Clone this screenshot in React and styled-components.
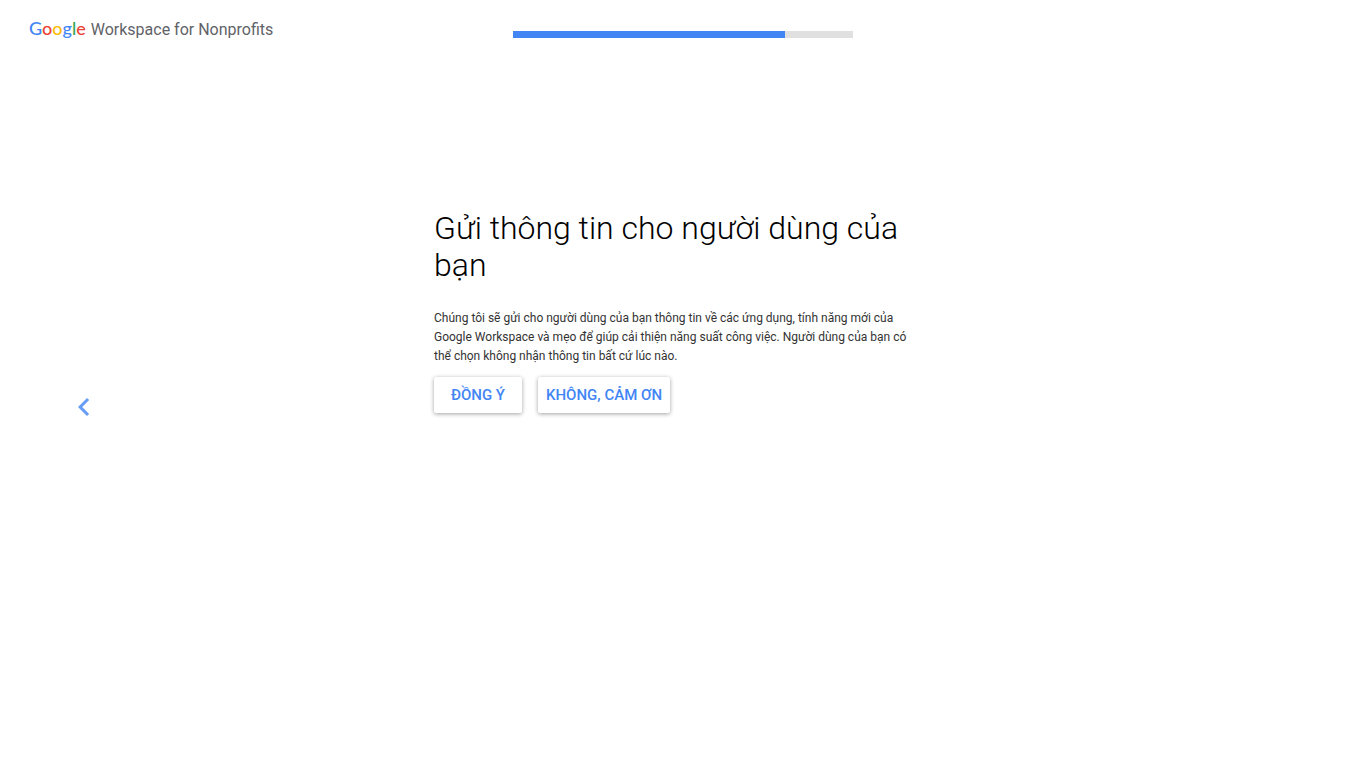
import React from 'react'
import styled, { createGlobalStyle } from 'styled-components'

const GlobalStyle = createGlobalStyle`
  * {
    box-sizing: border-box;
  }
  body {
    margin: 0;
    background: #fff;
    color: #000;
    font-family: Roboto, sans-serif;
  }
`

const Page = styled.div`
  display: flex;
  flex-direction: column;
  min-height: 100vh;
`

const Header = styled.header`
  display: grid;
  grid-template-columns: 1fr 340px 1fr;
  align-items: start;
  height: 46px;
  padding: 16px 29px 0;
`

const Logo = styled.div`
  display: flex;
  align-items: baseline;
  gap: 5px;
  color: #5f6368;
  font-size: 16px;
  line-height: 24px;
  white-space: nowrap;
`

const Wordmark = styled.span`
  font-family: Lato, sans-serif;
  font-size: 18px;
  font-weight: 500;
`

const Letter = styled.span`
  color: ${props => props.$color};
`

const ProgressTrack = styled.div`
  height: 7px;
  margin-top: 15px;
  background: #e0e0e0;
`

const ProgressFill = styled.div`
  height: 100%;
  background: #4285f4;
`

const Body = styled.div`
  flex: 1;
  display: grid;
  grid-template-columns: 1fr 498px 1fr;
`

const BackButton = styled.button`
  align-self: center;
  justify-self: start;
  display: flex;
  margin-left: 66px;
  padding: 0;
  border: 0;
  background: none;
  color: #4285f4;
  opacity: 0.8;
  cursor: pointer;
`

const Content = styled.main`
  padding-top: 164px;
`

const Title = styled.h1`
  margin: 0 0 25px;
  font-size: 32px;
  font-weight: 300;
  line-height: 37px;
`

const Description = styled.p`
  max-width: 486px;
  margin: 0 0 11px;
  color: #333;
  font-size: 12px;
  line-height: 19px;
`

const Actions = styled.div`
  display: flex;
  gap: 16px;
`

const ActionButton = styled.button`
  min-width: 88px;
  height: 36px;
  padding: 0 8px;
  border: 0;
  border-radius: 2px;
  background: #fff;
  box-shadow: 0 1px 4px rgba(0, 0, 0, 0.37);
  color: #4285f4;
  font-family: inherit;
  font-size: 15px;
  font-weight: 500;
  text-transform: uppercase;
  white-space: nowrap;
  cursor: pointer;
`

const letters = [
  ['G', '#4285f4'],
  ['o', '#ea4335'],
  ['o', '#fbbc04'],
  ['g', '#4285f4'],
  ['l', '#34a853'],
  ['e', '#ea4335'],
]

const Progress = ({ value }) => (
  <ProgressTrack role="progressbar" aria-valuenow={value} aria-valuemin={0} aria-valuemax={100}>
    <ProgressFill style={{ width: `${value}%` }} />
  </ProgressTrack>
)

const App = () => (
  <Page>
    <GlobalStyle />
    <Header>
      <Logo>
        <Wordmark>
          {letters.map(([letter, color], i) => (
            <Letter key={i} $color={color}>{letter}</Letter>
          ))}
        </Wordmark>
        <span>Workspace for Nonprofits</span>
      </Logo>
      <Progress value={80} />
    </Header>
    <Body>
      <BackButton type="button" aria-label="Quay lại">
        <svg width="36" height="36" viewBox="0 0 24 24" fill="currentColor">
          <path d="M15.41 7.41L14 6l-6 6 6 6 1.41-1.41L10.83 12z" />
        </svg>
      </BackButton>
      <Content>
        <Title>Gửi thông tin cho người dùng của bạn</Title>
        <Description>
          Chúng tôi sẽ gửi cho người dùng của bạn thông tin về các ứng dụng, tính năng mới của
          Google Workspace và mẹo để giúp cải thiện năng suất công việc. Người dùng của bạn có
          thể chọn không nhận thông tin bất cứ lúc nào.
        </Description>
        <Actions>
          <ActionButton type="button">Đồng ý</ActionButton>
          <ActionButton type="button">Không, cảm ơn</ActionButton>
        </Actions>
      </Content>
    </Body>
  </Page>
)

export default App
